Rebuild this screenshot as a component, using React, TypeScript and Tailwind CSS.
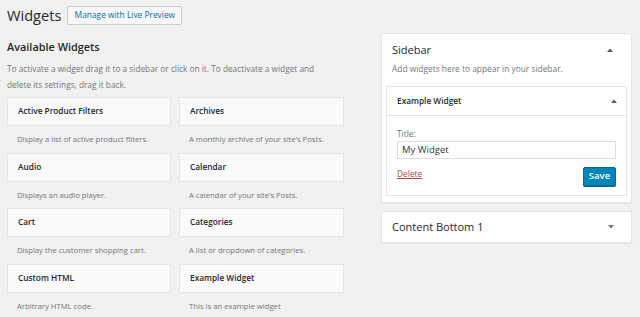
import React from "react";

const widgets = [
  ["Active Product Filters", "Display a list of active product filters."],
  ["Archives", "A monthly archive of your site\u2019s Posts."],
  ["Audio", "Displays an audio player."],
  ["Calendar", "A calendar of your site\u2019s Posts."],
  ["Cart", "Display the customer shopping cart."],
  ["Categories", "A list or dropdown of categories."],
  ["Custom HTML", "Arbitrary HTML code."],
  ["Example Widget", "This is an example widget"],
];

function UpArrow() {
  return (
    <svg width="6" height="4" viewBox="0 0 6 4" className="block">
      <path d="M0 4 L3 0.5 L6 4 Z" fill="#555d66" />
    </svg>
  );
}
function DownArrow() {
  return (
    <svg width="6" height="4" viewBox="0 0 6 4" className="block">
      <path d="M0 0 L3 3.5 L6 0 Z" fill="#72777c" />
    </svg>
  );
}

export default function App() {
  return (
    <div
      className="w-[640px] h-[317px] overflow-hidden bg-[#f1f1f1] text-[#23282d] flex"
      style={{ fontFamily: '"Open Sans", "Noto Sans", sans-serif' }}
    >
      <div className="w-[344px] pl-[7px] shrink-0">
        <div className="flex items-center h-[30px] pt-[1px]">
          <h1 className="text-[14.6px] leading-none font-normal text-[#23282d]">Widgets</h1>
          <button className="ml-[6px] h-[19px] w-[115px] border border-[#cccccc] bg-[#f7f7f7] rounded-[2px] text-[8.4px] leading-none text-[#0073aa] flex items-center justify-center">
            Manage with Live Preview
          </button>
        </div>
        <h2 className="mt-[9px] text-[10.9px] leading-[16px] font-semibold text-[#23282d]">Available Widgets</h2>
        <p className="mt-[6px] text-[8.3px] leading-[16px] text-[#72777c] w-[330px]">
          To activate a widget drag it to a sidebar or click on it. To deactivate a widget and delete its settings, drag it back.
        </p>
        <div className="mt-[4px] grid grid-cols-[164px_165px] gap-x-[8px]">
          {widgets.map(([t, d]) => (
            <div key={t} className="h-[55.5px] flex flex-col">
              <div className="shrink-0 h-[29px] bg-[#fafafa] border border-[#e5e5e5] flex items-center px-[10px] text-[8.3px] font-semibold text-[#23282d]">
                {t}
              </div>
              <div className="mt-[8px] text-[7.7px] leading-[10px] text-[#72777c] pl-[10px] whitespace-nowrap">{d}</div>
            </div>
          ))}
        </div>
      </div>

      <div className="ml-[37px] w-[251px] pt-[33px] flex flex-col gap-[8px]">
        <div className="bg-white border border-[#e5e5e5] shadow-[0_1px_1px_rgba(0,0,0,0.04)] px-[4px] pb-[6px]">
          <div className="flex items-center justify-between h-[30px] pl-[6px] pr-[14px] pt-[2px]">
            <span className="text-[11px] text-[#23282d]">Sidebar</span>
            <UpArrow />
          </div>
          <div className="pl-[6px] text-[8.4px] leading-[10px] text-[#72777c] h-[22px]">
            Add widgets here to appear in your sidebar.
          </div>
          <div className="border border-[#e5e5e5] bg-white">
            <div className="h-[29px] flex items-center justify-between pl-[10px] pr-[9px] border-b border-[#e5e5e5]">
              <span className="text-[8.3px] font-semibold text-[#23282d]">Example Widget</span>
              <UpArrow />
            </div>
            <div className="px-[10px] pt-[12px] pb-[9px]">
              <div className="text-[8.4px] leading-[12px] text-[#72777c]">Title:</div>
              <div className="mt-[1px] h-[18px] border border-[#dddddd] flex items-center px-[4px] text-[9.5px] text-[#32373c]">
                My Widget
              </div>
              <div className="mt-[8px] flex items-start justify-between">
                <span className="mt-[1px] text-[8.4px] leading-[12px] text-[#a3504a] underline">Delete</span>
                <span className="h-[19px] w-[33px] justify-center bg-[#0085ba] border border-[#006799] rounded-[2px] text-white text-[9.5px] font-semibold flex items-center shadow-[0_1px_0_#006799]">
                  Save
                </span>
              </div>
            </div>
          </div>
        </div>
        <div className="bg-white border border-[#e5e5e5] shadow-[0_1px_1px_rgba(0,0,0,0.04)] h-[32px] flex items-center justify-between pl-[10px] pr-[17px]">
          <span className="text-[11px] text-[#23282d]">Content Bottom 1</span>
          <DownArrow />
        </div>
      </div>
    </div>
  );
}
